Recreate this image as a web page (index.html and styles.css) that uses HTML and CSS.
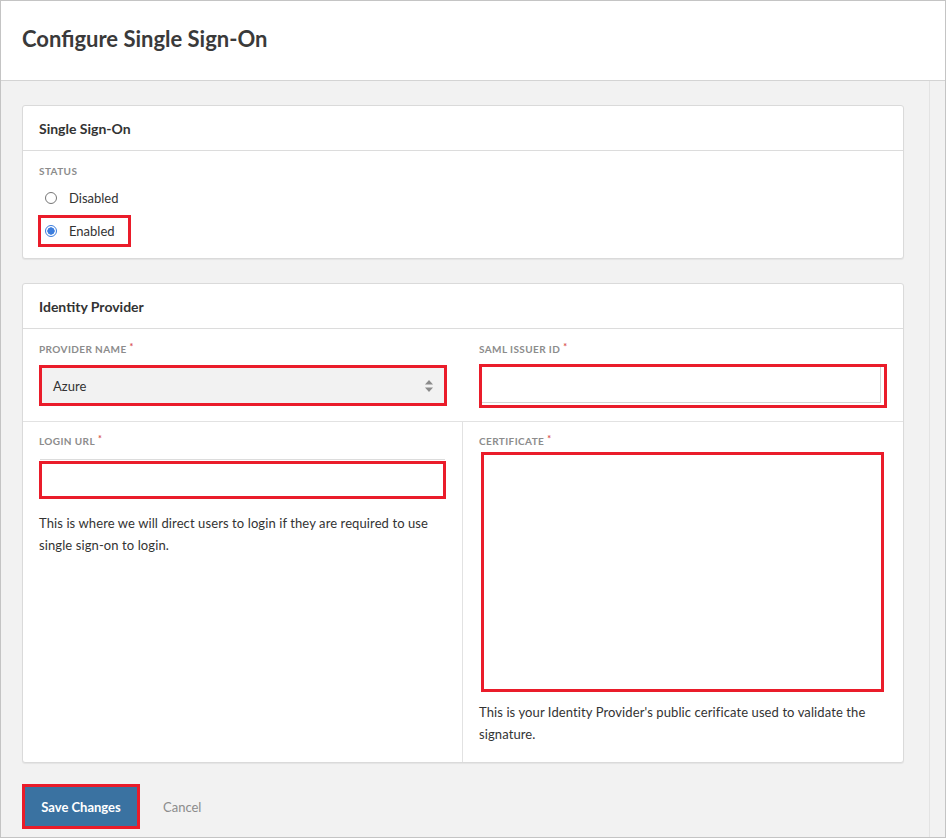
FILE: index.html
```html
<!DOCTYPE html>
<html>
<head>
<meta charset="utf-8">
<link rel="stylesheet" href="styles.css">
</head>
<body>
<div class="frame">
  <header class="page-header">
    <h1 class="page-title">Configure Single Sign-On</h1>
  </header>
  <div class="main">
    <div class="content">
      <section class="card">
        <div class="card-head">Single Sign-On</div>
        <div class="card-body sso-body">
          <div class="label">STATUS</div>
          <div class="radio-row"><span class="radio"></span><span class="radio-text">Disabled</span></div>
          <div class="radio-row mark"><span class="radio checked"></span><span class="radio-text">Enabled</span></div>
        </div>
      </section>

      <section class="card idp">
        <div class="card-head">Identity Provider</div>
        <div class="grid">
          <div class="cell">
            <div class="label">PROVIDER NAME<span class="req">*</span></div>
            <div class="select mark">
              <span class="select-text">Azure</span>
              <svg class="arrows" width="10" height="14" viewBox="0 0 10 14"><path d="M5 1 L9 5.5 L1 5.5 Z" fill="#8b8b8b"/><path d="M5 13 L9 8.5 L1 8.5 Z" fill="#8b8b8b"/></svg>
            </div>
          </div>
          <div class="cell">
            <div class="label">SAML ISSUER ID<span class="req">*</span></div>
            <div class="input mark tall"><div class="input-inner"></div></div>
          </div>
          <div class="cell row2 left">
            <div class="label">LOGIN URL<span class="req">*</span></div>
            <div class="input-top-line"></div>
            <div class="input mark"></div>
            <p class="help">This is where we will direct users to login if they are required to use single sign-on to login.</p>
          </div>
          <div class="cell row2">
            <div class="label">CERTIFICATE<span class="req">*</span></div>
            <div class="textarea mark"></div>
            <p class="help">This is your Identity Provider's public cerificate used to validate the signature.</p>
          </div>
        </div>
      </section>

      <div class="actions">
        <button class="btn-save">Save Changes</button>
        <span class="btn-cancel">Cancel</span>
      </div>
    </div>
    <div class="scroll-track"></div>
  </div>
</div>
</body>
</html>
```

FILE: styles.css
```css
* { box-sizing: border-box; }
html, body { margin: 0; padding: 0; }
body {
  font-family: Lato, "Open Sans", sans-serif;
  color: #333;
  background: #fff;
}
.frame {
  width: 946px;
  height: 838px;
  border: 1px solid #c4c4c4;
  display: flex;
  flex-direction: column;
  background: #f2f2f2;
  overflow: hidden;
}
.page-header {
  height: 80px;
  background: #fff;
  border-bottom: 1px solid #d4d4d4;
  padding: 0 21px;
  display: flex;
  align-items: center;
  flex: none;
}
.page-title {
  margin: 0;
  font-size: 22px;
  font-weight: 700;
  color: #3a3a3a;
  letter-spacing: 0;
  position: relative;
  top: -2px;
}
.main {
  flex: 1;
  display: flex;
}
.content {
  width: 928px;
  padding: 24px 25px 0 21px;
}
.scroll-track {
  flex: 1;
  border-left: 1px solid #e3e3e3;
  background: #f2f2f2;
}
.card {
  background: #fff;
  border: 1px solid #dadada;
  border-radius: 3px;
  box-shadow: 0 1px 1px rgba(0,0,0,0.06);
}
.card-head {
  height: 45px;
  border-bottom: 1px solid #dcdcdc;
  padding: 0 16px;
  display: flex;
  align-items: center;
  font-size: 14px;
  font-weight: 700;
  color: #333;
}
.sso-body {
  padding: 14px 16px 11px 16px;
}
.label {
  font-size: 10px;
  font-weight: 700;
  color: #8c8c8c;
  letter-spacing: 0.4px;
  line-height: 12px;
}
.req {
  color: #d9534f;
  font-size: 9px;
  margin-left: 3px;
  position: relative;
  top: -3px;
}
.radio-row {
  display: flex;
  align-items: center;
  height: 32px;
  width: 93px;
  padding-left: 7px;
  margin-left: -1px;
  font-size: 13px;
  color: #333;
}
.radio-row.mark { padding-left: 4px; }
.sso-body .label { margin-bottom: 5px; }
.radio-row + .radio-row { margin-top: 1px; }
.radio {
  width: 12px;
  height: 12px;
  border-radius: 50%;
  border: 1px solid #767676;
  background: #fff;
  margin-right: 12px;
  flex: none;
}
.radio.checked {
  border: 1px solid #3b7ddd;
  background: radial-gradient(circle, #3b7ddd 0 3.4px, #fff 3.9px);
}
.mark { border: 3px solid #ea1c2a; }
.idp { margin-top: 24px; }
.grid {
  display: grid;
  grid-template-columns: 440px 1fr;
}
.cell {
  padding: 14px 16px 13px 16px;
}
.cell:nth-child(1), .cell:nth-child(2) {
  border-bottom: 1px solid #e2e2e2;
}
.row2 { padding-top: 13px; padding-bottom: 17px; }
.row2.left { border-right: 1px solid #e2e2e2; }
.cell .label { margin-bottom: 9px; }
.select {
  height: 41px;
  background: #f2f2f2;
  display: flex;
  align-items: center;
  justify-content: space-between;
  padding: 0 10px 0 11px;
  font-size: 13px;
  color: #333;
}
.arrows { display: block; }
.input {
  height: 38px;
  background: #fff;
}
.input.tall {
  height: 44px;
  margin-top: -1px;
  padding: 0 3px 2px 0;
}
.input-inner {
  height: 100%;
  border-right: 1px solid #d4d4d4;
  border-bottom: 1px solid #d4d4d4;
}
.input-top-line {
  height: 1px;
  background: #dcdcdc;
  margin: 11px 1px 1px 1px;
}
.row2 .label { margin-bottom: 0; }
.textarea {
  height: 240px;
  margin: 4px 3px 0 2px;
}
.help {
  margin: 9px 0 0 0;
  font-size: 13px;
  line-height: 22px;
  letter-spacing: 0.1px;
  color: #333;
}
.row2.left .help { margin-top: 13px; }
.actions {
  display: flex;
  align-items: center;
  margin-top: 21px;
}
.btn-save {
  font-family: inherit;
  background: #3a72a1;
  color: #fff;
  font-size: 13px;
  font-weight: 700;
  height: 45px;
  width: 118px;
  border: 3px solid #ea1c2a;
  padding: 0;
  margin: 0;
}
.btn-cancel {
  margin-left: 23px;
  font-size: 13px;
  color: #8c8c8c;
}
```
